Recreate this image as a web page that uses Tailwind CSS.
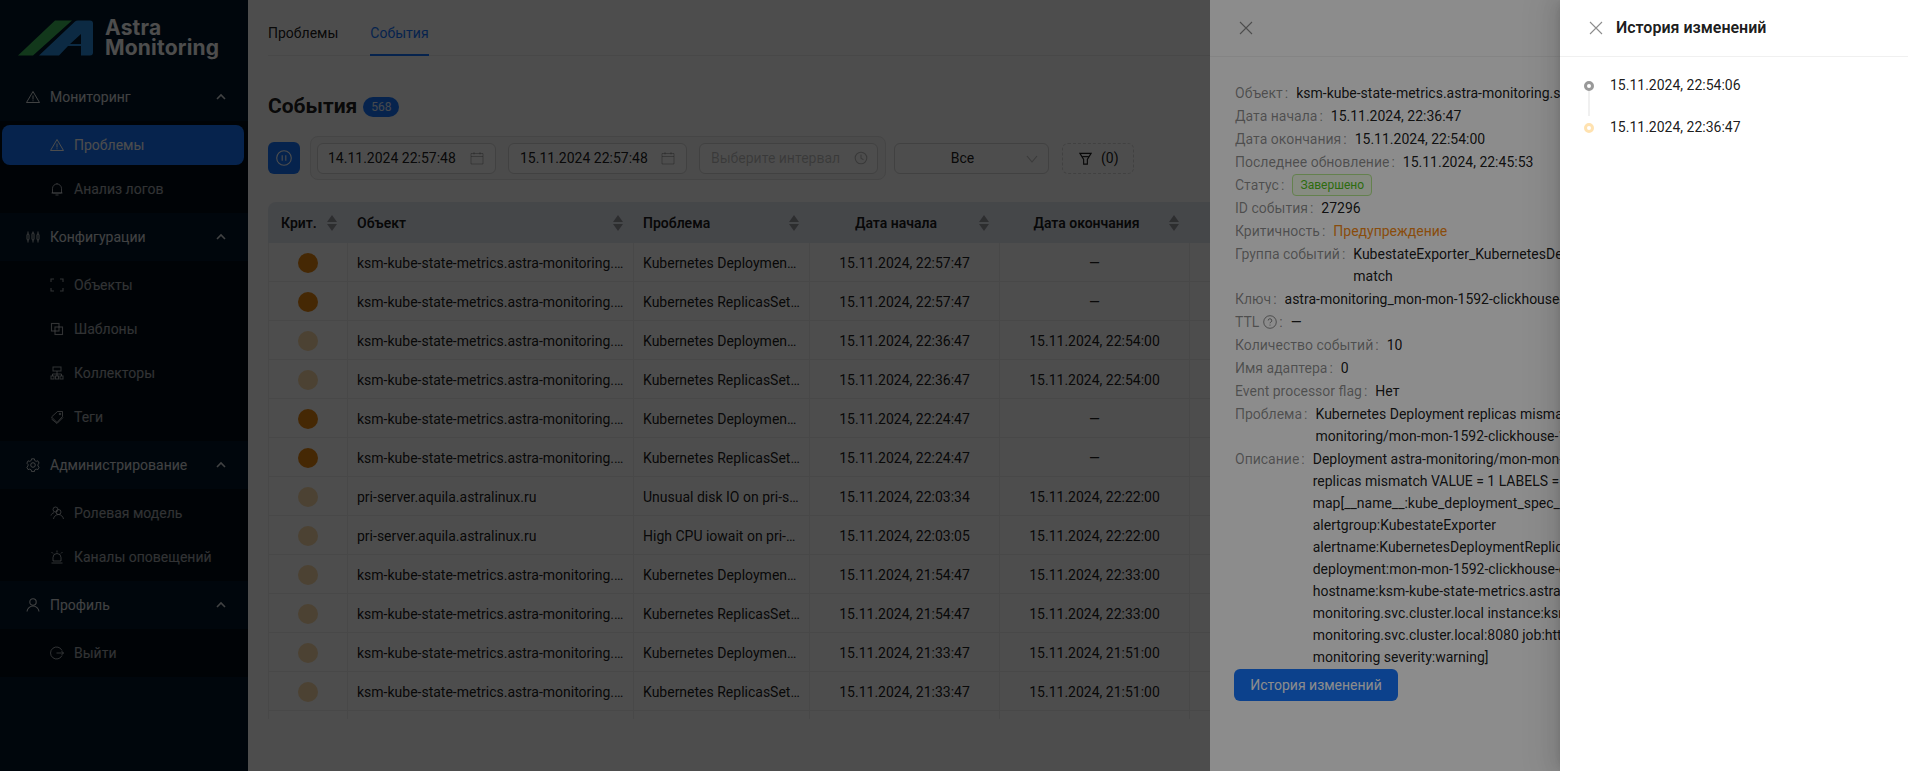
<!DOCTYPE html>
<html lang="ru">
<head>
    <meta charset="UTF-8">
    <title>Astra Monitoring - События</title>
    <script src="https://cdn.jsdelivr.net/npm/@tailwindcss/browser@4"></script>
</head>
<body class="font-['Roboto',sans-serif] text-sm text-black/90 bg-white">
<div class="relative flex h-[771px] w-[1908px] overflow-hidden">

    <!-- sidebar -->
    <aside class="w-[248px] shrink-0 bg-[#001529] text-white/65">
        <div class="h-[73px] flex items-start">
            <svg class="mt-[20px] ml-[18px] shrink-0" width="76" height="36" viewBox="0 0 76 36">
                <path d="M0 35.5 L37 0.5 H54 L15 35.5 Z" fill="#3ebc5c"/>
                <path fill-rule="evenodd" fill="#2a8fe0" d="M21 35.5 L57 1.5 Q58 0.5 60 0.5 H72 Q75 0.5 75 3.5 V32.5 Q75 35.5 72 35.5 H63 V26 H50 L41 35.5 Z M63 14 L52 24 H63 Z"/>
            </svg>
            <div class="ml-[11px] mt-[18px] font-['Inter',sans-serif] font-bold text-[21px] tracking-[0.2px] leading-[20px] text-white">Astra<br>Monitoring</div>
        </div>

        <div class="h-12 flex items-center pl-[26px] pr-[22px] text-white/85">
            <svg class="w-[14px] h-[14px] mr-[10px]" viewBox="0 0 14 14" fill="none" stroke="currentColor" stroke-width="1"><path d="M7 1.5 13.5 12.5H.5Z"/><path d="M7 5.5v4M7 10.3v1"/></svg>
            <span class="flex-1">Мониторинг</span>
            <svg class="w-[10px] h-[10px]" viewBox="0 0 10 10" fill="none" stroke="currentColor" stroke-width="1.6"><path d="M1 7l4-4 4 4"/></svg>
        </div>
        <div class="bg-[#000c17] py-1 flex flex-col gap-1">
            <div class="mx-[2px] w-[242px] h-10 rounded-lg bg-[#1677ff] text-white flex items-center pl-[48px]">
                <svg class="w-[14px] h-[14px] mr-[10px]" viewBox="0 0 14 14" fill="none" stroke="currentColor" stroke-width="1"><path d="M7 1.5 13.5 12.5H.5Z"/><path d="M7 5.5v4M7 10.3v1"/></svg>
                <span>Проблемы</span>
            </div>
            <div class="h-10 flex items-center pl-[50px]">
                <svg class="w-[14px] h-[14px] mr-[10px]" viewBox="0 0 14 14" fill="none" stroke="currentColor" stroke-width="1"><path d="M2.5 11V6.5a4.5 4.5 0 0 1 9 0V11ZM1.5 11h11M5.5 13h3M7 1v1"/></svg>
                <span>Анализ логов</span>
            </div>
        </div>

        <div class="h-12 flex items-center pl-[26px] pr-[22px] text-white/85">
            <svg class="w-[14px] h-[14px] mr-[10px]" viewBox="0 0 14 14" fill="none" stroke="currentColor" stroke-width="0.9"><rect x="1" y="4" width="2" height="6" rx="1"/><rect x="6" y="3" width="2" height="7" rx="1"/><rect x="11" y="4" width="2" height="6" rx="1"/><path d="M2 1.500v2.500M2 10v2.500M7 1.500V3M7 10v2.500M12 1.500V4M12 10v2.500"/></svg>
            <span class="flex-1">Конфигурации</span>
            <svg class="w-[10px] h-[10px]" viewBox="0 0 10 10" fill="none" stroke="currentColor" stroke-width="1.6"><path d="M1 7l4-4 4 4"/></svg>
        </div>
        <div class="bg-[#000c17] py-1 flex flex-col gap-1">
            <div class="h-10 flex items-center pl-[50px]">
                <svg class="w-[14px] h-[14px] mr-[10px]" viewBox="0 0 14 14" fill="none" stroke="currentColor" stroke-width="1.1"><path d="M1 4V1h3M10 1h3v3M13 10v3h-3M4 13H1v-3"/></svg>
                <span>Объекты</span>
            </div>
            <div class="h-10 flex items-center pl-[50px]">
                <svg class="w-[14px] h-[14px] mr-[10px]" viewBox="0 0 14 14" fill="none" stroke="currentColor" stroke-width="1.1"><rect x="1.500" y="1.500" width="7.500" height="7.500"/><rect x="5" y="5" width="7.500" height="7.500"/></svg>
                <span>Шаблоны</span>
            </div>
            <div class="h-10 flex items-center pl-[50px]">
                <svg class="w-[14px] h-[14px] mr-[10px]" viewBox="0 0 14 14" fill="none" stroke="currentColor" stroke-width="1"><rect x="3" y="1" width="8" height="4"/><path d="M7 5v3M2.500 10V8h9v2M7 8v2"/><rect x="1" y="10" width="3" height="3"/><rect x="5.500" y="10" width="3" height="3"/><rect x="10" y="10" width="3" height="3"/></svg>
                <span>Коллекторы</span>
            </div>
            <div class="h-10 flex items-center pl-[50px]">
                <svg class="w-[14px] h-[14px] mr-[10px]" viewBox="0 0 14 14" fill="none" stroke="currentColor" stroke-width="1"><path d="M1.500 7 7.500 1.500H12.500V6.500L7 12.500Z"/><path d="M1.500 9 7 13.500l6-6"/><circle cx="10" cy="4" r=".8"/></svg>
                <span>Теги</span>
            </div>
        </div>

        <div class="h-12 flex items-center pl-[26px] pr-[22px] text-white/85">
            <svg class="w-[14px] h-[14px] mr-[10px]" viewBox="0 0 14 14" fill="none" stroke="currentColor" stroke-width="1"><path d="M5.500 1h3l.4 1.800 1.500.9 1.800-.6 1.400 2.600-1.300 1.300v1.700l1.300 1.300-1.400 2.600-1.800-.6-1.500.9-.4 1.800h-3l-.4-1.800-1.500-.9-1.800.6L.4 10l1.300-1.300V7L.4 5.700l1.400-2.600 1.800.6 1.500-.9Z" transform="scale(.93) translate(.5 -.1)"/><circle cx="7" cy="7" r="2.300"/></svg>
            <span class="flex-1">Администрирование</span>
            <svg class="w-[10px] h-[10px]" viewBox="0 0 10 10" fill="none" stroke="currentColor" stroke-width="1.6"><path d="M1 7l4-4 4 4"/></svg>
        </div>
        <div class="bg-[#000c17] py-1 flex flex-col gap-1">
            <div class="h-10 flex items-center pl-[50px]">
                <svg class="w-[14px] h-[14px] mr-[10px]" viewBox="0 0 14 14" fill="none" stroke="currentColor" stroke-width="1"><circle cx="5.500" cy="3.500" r="2.500"/><circle cx="8.500" cy="6" r="2.500"/><path d="M1 9.500c.4-1.500 1.500-2.500 3-2.800M3.500 13c.3-2.500 2.500-4.500 5-4.500s4.500 2 5 4.500"/></svg>
                <span>Ролевая модель</span>
            </div>
            <div class="h-10 flex items-center pl-[50px]">
                <svg class="w-[14px] h-[14px] mr-[10px]" viewBox="0 0 14 14" fill="none" stroke="currentColor" stroke-width="1"><path d="M3 11V7.500a4 4 0 0 1 8 0V11ZM1.500 13h11M7 .5v2M1.500 2l1.500 1.500M12.500 2 11 3.500"/></svg>
                <span>Каналы оповещений</span>
            </div>
        </div>

        <div class="h-12 flex items-center pl-[26px] pr-[22px] text-white/85">
            <svg class="w-[14px] h-[14px] mr-[10px]" viewBox="0 0 14 14" fill="none" stroke="currentColor" stroke-width="1.1"><circle cx="7" cy="4" r="3.200"/><path d="M1 13.500c.3-3 3-5.500 6-5.500s5.700 2.500 6 5.500"/></svg>
            <span class="flex-1">Профиль</span>
            <svg class="w-[10px] h-[10px]" viewBox="0 0 10 10" fill="none" stroke="currentColor" stroke-width="1.6"><path d="M1 7l4-4 4 4"/></svg>
        </div>
        <div class="bg-[#000c17] py-1">
            <div class="h-10 flex items-center pl-[50px]">
                <svg class="w-[14px] h-[14px] mr-[10px]" viewBox="0 0 14 14" fill="none" stroke="currentColor" stroke-width="1"><path d="M12 4.500A6 6 0 1 0 12 9.500M6.500 7H13.500M11.500 5l2 2-2 2"/></svg>
                <span>Выйти</span>
            </div>
        </div>
    </aside>

    <!-- main -->
    <main class="flex-1 min-w-0 px-5 overflow-hidden">
        <div class="flex gap-8 h-[56px] border-b border-[#f0f0f0]">
            <div class="leading-[66px]">Проблемы</div>
            <div class="leading-[66px] text-[#1677ff] border-b-2 border-[#1677ff] h-[56px]">События</div>
        </div>

        <div class="flex items-center mt-[32px] h-[36px]">
            <h1 class="text-[21px] font-bold leading-7">События</h1>
            <span class="ml-[6px] mt-[2px] w-9 h-5 rounded-full bg-[#1677ff] text-white/90 text-xs flex items-center justify-center">568</span>
        </div>

        <div class="flex items-center mt-[12px] h-[44px]">
            <button class="w-8 h-8 rounded-md bg-[#1677ff] flex items-center justify-center text-white">
                <svg class="w-4 h-4" viewBox="0 0 16 16" fill="none" stroke="currentColor" stroke-width="1.1"><circle cx="8" cy="8" r="7.300"/><path d="M6.200 5.200v5.600M9.800 5.200v5.600"/></svg>
            </button>
            <div class="ml-[10px] w-[576px] h-[44px] border border-[#e5e5e5] rounded-lg bg-[#fafafa] flex items-center gap-3 pl-[6px]">
                <div class="w-[179px] h-[31px] border border-[#d9d9d9] rounded-md bg-white flex items-center justify-between pl-[10px] pr-[11px]">
                    <span>14.11.2024 22:57:48</span>
                    <svg class="w-[14px] h-[14px] text-black/25" viewBox="0 0 14 14" fill="none" stroke="currentColor"><path d="M1 2.500h12v10.500H1ZM1 5.500h12M4 1v2.500M10 1v2.500"/></svg>
                </div>
                <div class="w-[179px] h-[31px] border border-[#d9d9d9] rounded-md bg-white flex items-center justify-between pl-[11px] pr-[11px]">
                    <span>15.11.2024 22:57:48</span>
                    <svg class="w-[14px] h-[14px] text-black/25" viewBox="0 0 14 14" fill="none" stroke="currentColor"><path d="M1 2.500h12v10.500H1ZM1 5.500h12M4 1v2.500M10 1v2.500"/></svg>
                </div>
                <div class="w-[179px] h-[31px] border border-[#d9d9d9] rounded-md bg-white flex items-center justify-between pl-[11px] pr-[9px] text-black/25">
                    <span>Выберите интервал</span>
                    <svg class="w-[14px] h-[14px]" viewBox="0 0 14 14" fill="none" stroke="currentColor" stroke-width="1.100"><circle cx="7" cy="7" r="5.800"/><path d="M7 3.500V7.300L9.500 8.800"/></svg>
                </div>
            </div>
            <div class="ml-2 w-[155px] h-[31px] border border-[#d9d9d9] rounded-md relative flex items-center justify-center pr-[18px]">
                <span>Все</span>
                <svg class="absolute right-[10px] top-[10px] w-[12px] h-[10px] text-black/25" viewBox="0 0 12 10" fill="none" stroke="currentColor" stroke-width="1.100"><path d="M1 2l5 6 5-6"/></svg>
            </div>
            <div class="ml-[13px] w-[72px] h-[31px] border border-dashed border-[#d9d9d9] rounded-md flex items-center pl-4 gap-[9px]">
                <svg class="w-[13px] h-[13px]" viewBox="0 0 14 14" fill="none" stroke="currentColor" stroke-width="1.200"><path d="M1 1.500h12L9 8v5H5V8Z"/><path d="M3.500 5h7"/></svg>
                <span>(0)</span>
            </div>
        </div>

        <table class="table-fixed mt-[22px] w-[1620px] border-separate border-spacing-0">
            <colgroup>
                <col class="w-[80px]"><col class="w-[286px]"><col class="w-[176px]"><col class="w-[190px]"><col class="w-[190px]"><col>
            </colgroup>
            <thead>
                <tr class="bg-[#e8ebf5] font-semibold">
                    <th class="h-[41px] rounded-tl-lg border-r border-[#e8ebf5] p-0">
                        <div class="flex items-center justify-between pl-[13px] pr-[10px]"><span class="font-semibold">Крит.</span><svg class="w-[10px] h-[16px] text-black/35" viewBox="0 0 10 16" fill="currentColor"><path d="M5 0l5 7H0ZM5 16l5-7H0Z"/></svg></div>
                    </th>
                    <th class="p-0 border-r border-[#e8ebf5]">
                        <div class="flex items-center justify-between pl-[9px] pr-[10px]"><span class="font-semibold">Объект</span><svg class="w-[10px] h-[16px] text-black/35" viewBox="0 0 10 16" fill="currentColor"><path d="M5 0l5 7H0ZM5 16l5-7H0Z"/></svg></div>
                    </th>
                    <th class="p-0 border-r border-[#e8ebf5]">
                        <div class="flex items-center justify-between pl-[9px] pr-[10px]"><span class="font-semibold">Проблема</span><svg class="w-[10px] h-[16px] text-black/35" viewBox="0 0 10 16" fill="currentColor"><path d="M5 0l5 7H0ZM5 16l5-7H0Z"/></svg></div>
                    </th>
                    <th class="p-0 border-r border-[#e8ebf5]">
                        <div class="flex items-center pl-2 pr-[10px]"><span class="flex-1 text-center font-semibold mr-[5px]">Дата начала</span><svg class="w-[10px] h-[16px] text-black/35" viewBox="0 0 10 16" fill="currentColor"><path d="M5 0l5 7H0ZM5 16l5-7H0Z"/></svg></div>
                    </th>
                    <th class="p-0 border-r border-[#e8ebf5]">
                        <div class="flex items-center pl-2 pr-[10px]"><span class="flex-1 text-center font-semibold mr-[4px]">Дата окончания</span><svg class="w-[10px] h-[16px] text-black/35" viewBox="0 0 10 16" fill="currentColor"><path d="M5 0l5 7H0ZM5 16l5-7H0Z"/></svg></div>
                    </th>
                    <th class="p-0"></th>
                </tr>
            </thead>
            <tbody id="rows"></tbody>
        </table>
    </main>

    <!-- first drawer -->
    <div class="absolute inset-0 bg-black/45"></div>
    <div class="absolute top-0 bottom-0 left-[1210px] w-[698px] bg-white whitespace-nowrap">
        <div class="h-[57px] border-b border-[#f0f0f0] pl-[29px] pt-[21px]">
            <svg class="w-[14px] h-[14px] text-black/45" viewBox="0 0 14 14" fill="none" stroke="currentColor" stroke-width="1.100"><path d="M1 1l12 12M13 1L1 13"/></svg>
        </div>
        <div class="pl-[25px] pt-[25px] leading-[22px]">
            <div class="flex mb-px"><span class="text-black/45">Объект<span class="ml-[2px] mr-2">:</span></span><span>ksm-kube-state-metrics.astra-monitoring.svc.cluster.local</span></div>
            <div class="flex mb-px"><span class="text-black/45">Дата начала<span class="ml-[2px] mr-2">:</span></span><span>15.11.2024, 22:36:47</span></div>
            <div class="flex mb-px"><span class="text-black/45">Дата окончания<span class="ml-[2px] mr-2">:</span></span><span>15.11.2024, 22:54:00</span></div>
            <div class="flex mb-px"><span class="text-black/45">Последнее обновление<span class="ml-[2px] mr-2">:</span></span><span>15.11.2024, 22:45:53</span></div>
            <div class="flex mb-px"><span class="text-black/45">Статус<span class="ml-[2px] mr-2">:</span></span><span class="w-[80px] h-[22px] border border-[#b7eb8f] bg-[#f6ffed] text-[#52c41a] text-xs rounded flex items-center justify-center">Завершено</span></div>
            <div class="flex mb-px"><span class="text-black/45">ID события<span class="ml-[2px] mr-2">:</span></span><span>27296</span></div>
            <div class="flex mb-px"><span class="text-black/45">Критичность<span class="ml-[2px] mr-2">:</span></span><span class="text-[#fa8c16]">Предупреждение</span></div>
            <div class="flex mb-px"><span class="text-black/45">Группа событий<span class="ml-[2px] mr-2">:</span></span><span>KubestateExporter_KubernetesDeploymentReplicasMis<br>match</span></div>
            <div class="flex mb-px"><span class="text-black/45">Ключ<span class="ml-[2px] mr-2">:</span></span><span>astra-monitoring_mon-mon-1592-clickhouse-operator</span></div>
            <div class="flex items-center mb-px"><span class="text-black/45 flex items-center">TTL<svg class="w-[14px] h-[14px] ml-1" viewBox="0 0 14 14" fill="none" stroke="currentColor"><circle cx="7" cy="7" r="6.300"/><path d="M5.200 5.500a1.800 1.800 0 1 1 2.500 1.700c-.5.200-.7.500-.7 1.100M7 9.600v1"/></svg><span class="ml-[2px] mr-2">:</span></span><span>—</span></div>
            <div class="flex mb-px"><span class="text-black/45">Количество событий<span class="ml-[2px] mr-2">:</span></span><span>10</span></div>
            <div class="flex mb-px"><span class="text-black/45">Имя адаптера<span class="ml-[2px] mr-2">:</span></span><span>0</span></div>
            <div class="flex mb-px"><span class="text-black/45">Event processor flag<span class="ml-[2px] mr-2">:</span></span><span>Нет</span></div>
            <div class="flex mb-px"><span class="text-black/45">Проблема<span class="ml-[2px] mr-2">:</span></span><span>Kubernetes Deployment replicas mismatch (astra-<br>monitoring/mon-mon-1592-clickhouse-1592-operator)</span></div>
            <div class="flex mb-px"><span class="text-black/45">Описание<span class="ml-[2px] mr-2">:</span></span><span>Deployment astra-monitoring/mon-mon-1592-clickhouse<br>replicas mismatch VALUE = 1 LABELS =<br>map[__name__:kube_deployment_spec_replicas<br>alertgroup:KubestateExporter<br>alertname:KubernetesDeploymentReplicasMismatch<br>deployment:mon-mon-1592-clickhouse-operator<br>hostname:ksm-kube-state-metrics.astra-<br>monitoring.svc.cluster.local instance:ksm-kube-state<br>monitoring.svc.cluster.local:8080 job:http-metrics<br>monitoring severity:warning]</span></div>
        </div>
        <button class="ml-6 w-[164px] h-8 rounded-md bg-[#1677ff] text-white">История изменений</button>
    </div>

    <!-- second drawer -->
    <div class="absolute inset-0 bg-black/45"></div>
    <div class="absolute top-0 bottom-0 left-[1560px] w-[348px] bg-white shadow-[-6px_0_16px_0_rgba(0,0,0,0.08),-3px_0_6px_-4px_rgba(0,0,0,0.12),-9px_0_28px_8px_rgba(0,0,0,0.05)]">
        <div class="h-[57px] border-b border-[#f0f0f0] flex items-center pl-[29px]">
            <svg class="w-[14px] h-[14px] text-black/45" viewBox="0 0 14 14" fill="none" stroke="currentColor" stroke-width="1.100"><path d="M1 1l12 12M13 1L1 13"/></svg>
            <span class="ml-[13px] text-base font-semibold">История изменений</span>
        </div>
        <div class="pl-[24px] pt-[17px]">
            <div class="flex items-start h-[42px]">
                <div class="w-[10px] flex flex-col items-center pt-[7px] h-full">
                    <span class="w-[10px] h-[10px] rounded-full border-[3px] border-[#999999] bg-white shrink-0"></span>
                    <span class="w-[2px] flex-1 bg-[#f0f0f0]"></span>
                </div>
                <span class="ml-[16px] leading-[22px]">15.11.2024, 22:54:06</span>
            </div>
            <div class="flex items-start">
                <div class="w-[10px] flex flex-col items-center pt-[7px]">
                    <span class="w-[10px] h-[10px] rounded-full border-[3px] border-[#ffe2b0] bg-white"></span>
                </div>
                <span class="ml-[16px] leading-[22px]">15.11.2024, 22:36:47</span>
            </div>
        </div>
    </div>
</div>

<script>
    const ksm = 'ksm-kube-state-metrics.astra-monitoring.svc.cluster.local';
    const pri = 'pri-server.aquila.astralinux.ru';
    const dep = 'Kubernetes Deployment replicas mismatch';
    const rep = 'Kubernetes ReplicasSet replicas mismatch';
    const data = [
        [1, ksm, dep, '22:57:47', '—'],
        [1, ksm, rep, '22:57:47', '—'],
        [0, ksm, dep, '22:36:47', '22:54:00'],
        [0, ksm, rep, '22:36:47', '22:54:00'],
        [1, ksm, dep, '22:24:47', '—'],
        [1, ksm, rep, '22:24:47', '—'],
        [0, pri, 'Unusual disk IO on pri-server.aquila', '22:03:34', '22:22:00'],
        [0, pri, 'High CPU iowait on pri-server.aquila', '22:03:05', '22:22:00'],
        [0, ksm, dep, '21:54:47', '22:33:00'],
        [0, ksm, rep, '21:54:47', '22:33:00'],
        [0, ksm, dep, '21:33:47', '21:51:00'],
        [0, ksm, rep, '21:33:47', '21:51:00'],
    ];
    const td = 'h-[39px] border-r border-b border-[#f0f0f0] px-2 pt-px truncate';
    const fmt = v => v === '—' ? v : '15.11.2024, ' + v;
    document.getElementById('rows').innerHTML = data.map(([hot, obj, problem, start, end]) => `
        <tr>
            <td class="${td} border-l text-center"><span class="inline-block align-middle w-5 h-5 rounded-full ${hot ? 'bg-[#e8860f]' : 'bg-[#fbdcaa]'}"></span></td>
            <td class="${td} pl-[9px] pr-[4px]">${obj}</td>
            <td class="${td} pl-[9px] pr-[9px]">${problem}</td>
            <td class="${td} text-center">${fmt(start)}</td>
            <td class="${td} text-center">${fmt(end)}</td>
            <td class="${td}"></td>
        </tr>`).join('') + `
        <tr>
            <td class="h-2 border-l border-r border-[#f0f0f0]"></td>
            <td class="border-r border-[#f0f0f0]"></td>
            <td class="border-r border-[#f0f0f0]"></td>
            <td class="border-r border-[#f0f0f0]"></td>
            <td class="border-r border-[#f0f0f0]"></td>
            <td></td>
        </tr>`;
</script>
</body>
</html>
